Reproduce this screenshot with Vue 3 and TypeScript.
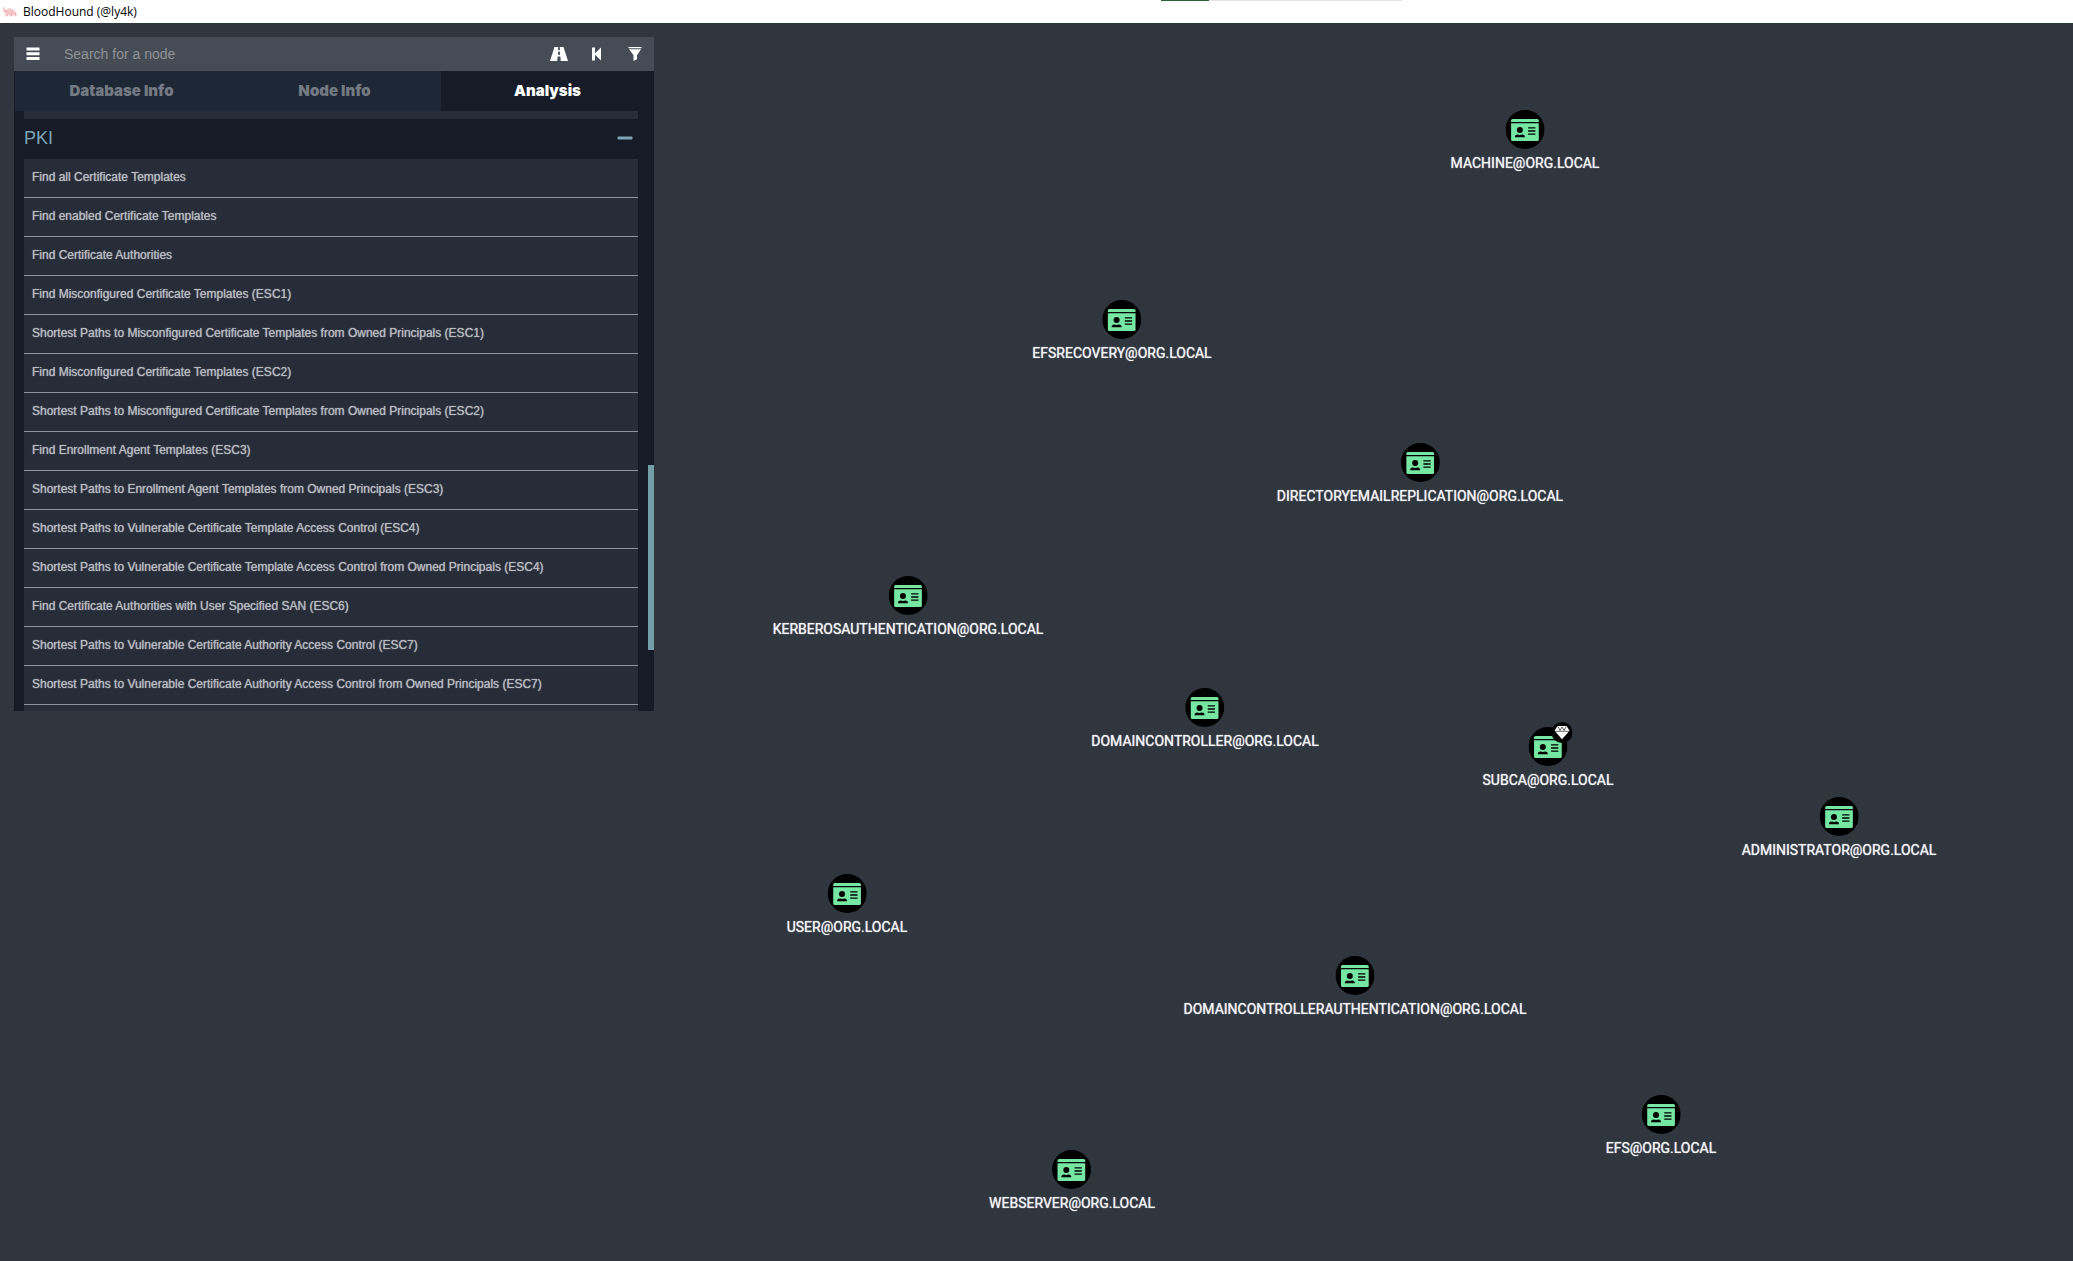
<script setup lang="ts">
import { ref } from 'vue'

interface GraphNode {
  name: string
  x: number
  y: number
  highValue?: boolean
}

const tabs: string[] = ['Database Info', 'Node Info', 'Analysis']
const activeTab = ref('Analysis')
const search = ref('')
const expanded = ref(true)

const queries: string[] = [
  'Find all Certificate Templates',
  'Find enabled Certificate Templates',
  'Find Certificate Authorities',
  'Find Misconfigured Certificate Templates (ESC1)',
  'Shortest Paths to Misconfigured Certificate Templates from Owned Principals (ESC1)',
  'Find Misconfigured Certificate Templates (ESC2)',
  'Shortest Paths to Misconfigured Certificate Templates from Owned Principals (ESC2)',
  'Find Enrollment Agent Templates (ESC3)',
  'Shortest Paths to Enrollment Agent Templates from Owned Principals (ESC3)',
  'Shortest Paths to Vulnerable Certificate Template Access Control (ESC4)',
  'Shortest Paths to Vulnerable Certificate Template Access Control from Owned Principals (ESC4)',
  'Find Certificate Authorities with User Specified SAN (ESC6)',
  'Shortest Paths to Vulnerable Certificate Authority Access Control (ESC7)',
  'Shortest Paths to Vulnerable Certificate Authority Access Control from Owned Principals (ESC7)',
]

// Node centres on the graph canvas
const nodes: GraphNode[] = [
  { name: 'MACHINE@ORG.LOCAL', x: 1525, y: 107 },
  { name: 'EFSRECOVERY@ORG.LOCAL', x: 1122, y: 297 },
  { name: 'DIRECTORYEMAILREPLICATION@ORG.LOCAL', x: 1420, y: 440 },
  { name: 'KERBEROSAUTHENTICATION@ORG.LOCAL', x: 908, y: 573 },
  { name: 'DOMAINCONTROLLER@ORG.LOCAL', x: 1205, y: 685 },
  { name: 'SUBCA@ORG.LOCAL', x: 1548, y: 724, highValue: true },
  { name: 'ADMINISTRATOR@ORG.LOCAL', x: 1839, y: 794 },
  { name: 'USER@ORG.LOCAL', x: 847, y: 871 },
  { name: 'DOMAINCONTROLLERAUTHENTICATION@ORG.LOCAL', x: 1355, y: 953 },
  { name: 'EFS@ORG.LOCAL', x: 1661, y: 1092 },
  { name: 'WEBSERVER@ORG.LOCAL', x: 1072, y: 1147 },
]
</script>

<template>
  <div class="window">
    <header class="titlebar">
      <svg class="logo" viewBox="0 0 16 12" aria-hidden="true">
        <path d="M1 1l2 3 4-2 4 1 3 3 1 4.500-2 0-1-1.500-2 1.500-2 0-1-1.500-2 1.500-2 0 0-3-2-2z" fill="#f9d3d6" />
        <path d="M1 1l1.500 2.500M2 5l3 1M4 4l4 4M7 3l3 5M10 4l3 4M5 10l1-3M9 10l1-3M14 10l-1-3" stroke="#f0a0a6" fill="none" stroke-width="0.800" />
      </svg>
      <span class="app-name">BloodHound (@ly4k)</span>
      <div class="progress"><div class="progress-fill"></div></div>
    </header>

    <main class="graph">
      <section class="panel">
        <form class="searchbar" @submit.prevent>
          <button type="button" class="icon-btn" aria-label="Menu">
            <svg width="14" height="14" viewBox="0 0 14 14"><path d="M0.500 0.500h13v3h-13zM0.500 5.200h13v3h-13zM0.500 10h13v3h-13z" fill="#fff" /></svg>
          </button>
          <input v-model="search" type="text" class="search" placeholder="Search for a node" aria-label="Search for a node" />
          <button type="button" class="icon-btn" aria-label="Pathfinding">
            <svg width="18" height="14" viewBox="0 0 18 14"><path d="M4.500 0H8.300L8 3H10L9.700 0H13.500L18 14H10.700L10.400 9.500H7.600L7.300 14H0ZM8.200 4.500L7.900 7.700H10.100L9.800 4.500Z" fill="#fff" fill-rule="evenodd" /></svg>
          </button>
          <button type="button" class="icon-btn" aria-label="Back">
            <svg width="10" height="14" viewBox="0 0 10 14"><path d="M0 0.500h3v5.700L9 0.500v13L3 7.800v5.700H0z" fill="#fff" /></svg>
          </button>
          <button type="button" class="icon-btn" aria-label="Filter">
            <svg width="14" height="14" viewBox="0 0 14 14"><path d="M0.500 0h13v1.200h-13zM1 2.200h12L9 8.200v4L5.500 14V8.200z" fill="#fff" /></svg>
          </button>
        </form>

        <nav class="tabs" role="tablist">
          <button
            v-for="tab in tabs"
            :key="tab"
            type="button"
            role="tab"
            class="tab"
            :class="{ active: tab === activeTab }"
            :aria-selected="tab === activeTab"
            @click="activeTab = tab"
          >{{ tab }}</button>
        </nav>

        <div class="content">
          <div class="previous-group"></div>
          <button type="button" class="group-head" :aria-expanded="expanded" @click="expanded = !expanded">
            <span>PKI</span>
            <svg width="16" height="4" viewBox="0 0 16 4"><rect x="0.500" y="0.500" width="15" height="3" rx="1" fill="#7ca6b8" /></svg>
          </button>
          <ul v-show="expanded" class="queries">
            <li v-for="query in queries" :key="query">
              <a href="#" @click.prevent>{{ query }}</a>
            </li>
            <li></li>
          </ul>
          <div class="scroll-thumb"></div>
        </div>
      </section>

      <div
        v-for="node in nodes"
        :key="node.name"
        class="node"
        :style="{ left: node.x + 'px', top: node.y + 'px' }"
      >
        <svg width="39" height="39" viewBox="0 0 39 39" aria-hidden="true">
          <circle cx="19.500" cy="19.500" r="19.500" fill="#000" />
          <path d="M7 9H31.700Q33.200 9 33.200 10.500V12H5.500V10.500Q5.500 9 7 9Z" fill="#76e6a3" />
          <path d="M5.500 13.300H33.200V29.500Q33.200 31 31.700 31H7Q5.500 31 5.500 29.500Z" fill="#76e6a3" />
          <circle cx="14.300" cy="20" r="3" fill="#000" />
          <path d="M9.300 27.300Q9.300 24.600 12 24.600Q14.300 25.400 16.600 24.600Q19.300 24.600 19.300 27.300Z" fill="#000" />
          <path d="M22.500 17.800h7.300M22.500 21h7.300M22.500 24.200h7.300" stroke="#000" stroke-width="1.300" />
        </svg>
        <svg v-if="node.highValue" class="gem" width="21" height="21" viewBox="0 0 21 21" aria-hidden="true">
          <circle cx="10.500" cy="10.500" r="10.500" fill="#000" />
          <path d="M6 4h9l3 4.700-7.500 8.500L3 8.700z" fill="#fff" />
          <path d="M3 9.300h15M6.500 4.500L8.500 8.500L10.500 5L12.500 8.500L14.500 4.500" stroke="#000" stroke-width="0.600" fill="none" />
        </svg>
        <span class="label">{{ node.name }}</span>
      </div>
    </main>
  </div>
</template>

<style>
body {
  margin: 0;
  background: #2f363e;
}
</style>

<style scoped>
.window {
  display: flex;
  flex-direction: column;
  min-height: 100vh;
  font-family: "Liberation Sans", Arial, sans-serif;
}
.titlebar {
  display: grid;
  grid-template-columns: 16px 1fr;
  align-items: center;
  column-gap: 5px;
  height: 23px;
  padding-left: 2px;
  background: #fff;
  position: relative;
}
.logo {
  width: 16px;
  height: 12px;
}
.app-name {
  font: 12px/16px "Open Sans", sans-serif;
  color: #000;
}
.progress {
  position: absolute;
  top: 0;
  left: 56%;
  width: 241px;
  height: 1px;
  background: #e3e3e3;
}
.progress-fill {
  width: 20%;
  height: 100%;
  background: #2a6430;
}
.graph {
  position: relative;
  flex: 1;
  padding: 14px;
  background: #2f363e;
  overflow: hidden;
}
.panel {
  width: 640px;
  background: #161c27;
}
.searchbar {
  display: flex;
  align-items: center;
  height: 34px;
  background: #464c55;
}
.icon-btn {
  display: flex;
  align-items: center;
  justify-content: center;
  width: 38px;
  height: 34px;
  padding: 0;
  border: 0;
  background: none;
}
.search {
  flex: 1;
  min-width: 0;
  height: 34px;
  padding: 0 12px;
  border: 0;
  outline: 0;
  background: none;
  color: #fff;
  font: 14px/20px "Liberation Sans", Arial, sans-serif;
}
.search::placeholder {
  color: #8f9296;
  opacity: 1;
}
.tabs {
  display: grid;
  grid-template-columns: repeat(3, 1fr);
  padding-left: 1px;
}
.tab {
  height: 40px;
  padding: 0;
  border: 0;
  background: #1e2735;
  color: #747a83;
  font: 900 15px/20px Inter, sans-serif;
}
.tab.active {
  background: #161c27;
  color: #fff;
}
.content {
  position: relative;
  height: 600px;
  padding: 0 16px 0 10px;
  overflow: hidden;
}
.previous-group {
  height: 8px;
  background: #272d38;
}
.group-head {
  display: flex;
  align-items: center;
  justify-content: space-between;
  width: 100%;
  height: 40px;
  padding: 0 5px 2px 0;
  border: 0;
  background: none;
  color: #7ca6b8;
  font: 18px/20px "Liberation Sans", Arial, sans-serif;
}
.queries {
  margin: 0;
  padding: 0;
  list-style: none;
}
.queries li {
  box-sizing: border-box;
  height: 39px;
  padding: 10px 8px;
  border-bottom: 1px solid #8e939e;
  background: #272d38;
}
.queries a {
  display: block;
  color: #b8bbc0;
  font-size: 12px;
  line-height: 17px;
  text-decoration: none;
  text-shadow: 0 0 1px #b8bbc0;
  white-space: nowrap;
}
.scroll-thumb {
  position: absolute;
  top: 354px;
  right: 0;
  width: 6px;
  height: 185px;
  background: #759fa8;
}
.node {
  position: absolute;
  display: flex;
  flex-direction: column;
  align-items: center;
  gap: 4px;
  margin-top: -20px;
  transform: translateX(-50%);
}
.gem {
  position: absolute;
  top: -5px;
  left: 50%;
  margin-left: 4px;
}
.label {
  color: #f2f3f4;
  font: 400 14px/20px Roboto, sans-serif;
  text-shadow: 0 0 1px #f2f3f4;
  white-space: nowrap;
}
</style>
